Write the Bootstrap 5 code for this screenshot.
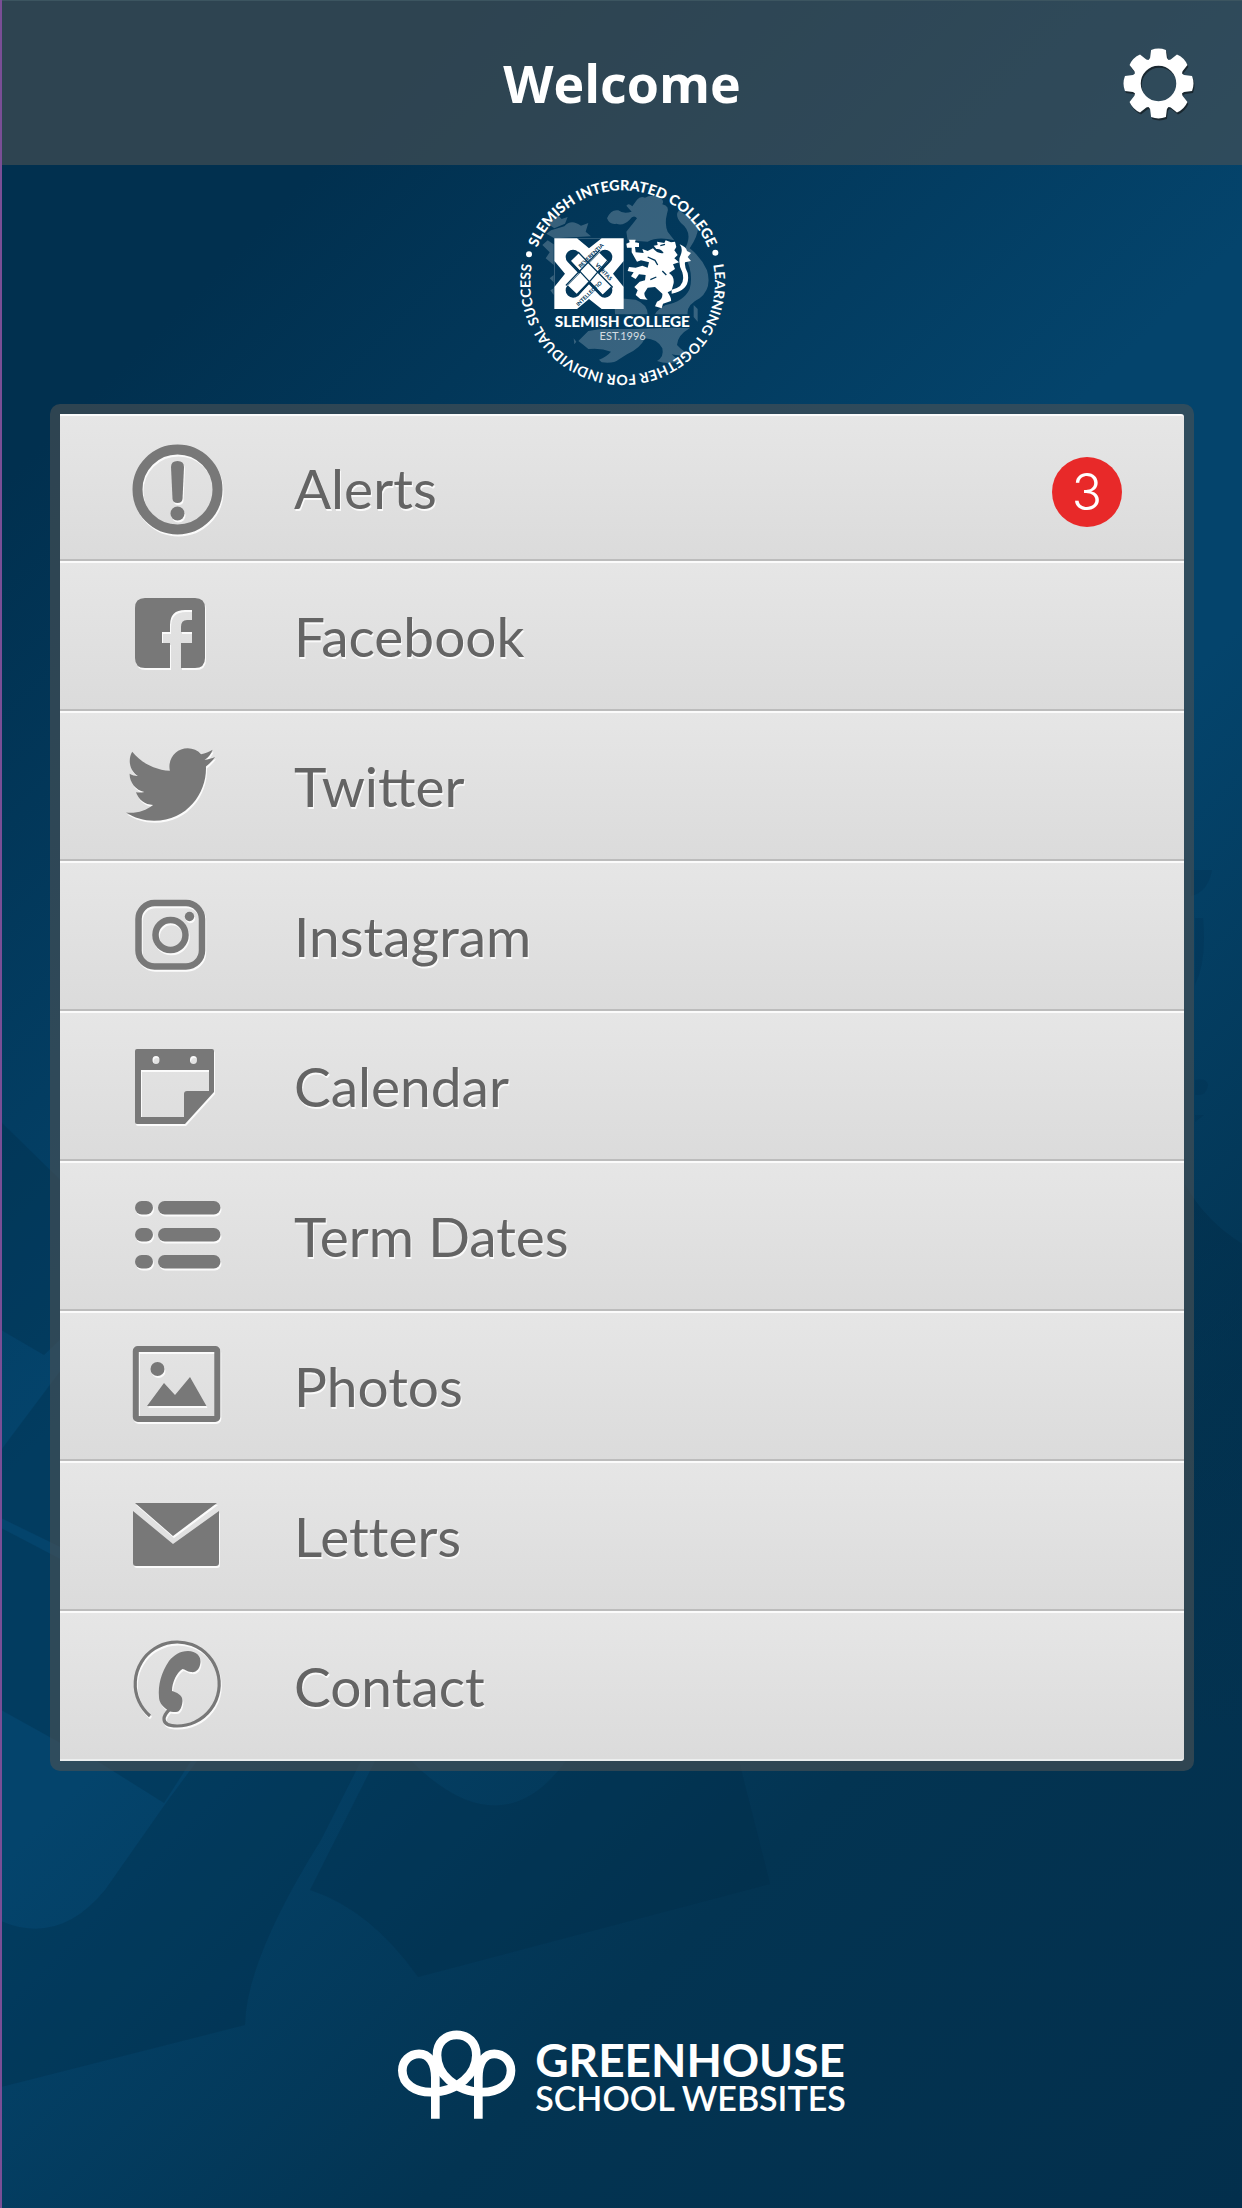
<!DOCTYPE html>
<html lang="en">
<head>
<meta charset="utf-8">
<meta name="viewport" content="width=device-width, initial-scale=1">
<title>Slemish College</title>
<link href="https://cdn.jsdelivr.net/npm/bootstrap@5.3.0/dist/css/bootstrap.min.css" rel="stylesheet">
<style>
  body { font-family: Lato, "Open Sans", sans-serif; background: #02304e; }
  .app-shell {
    border-left: 2px solid #7a4e96;
    background: linear-gradient(135deg, #01304f 0%, #01304f 14%, #04446c 43%, #04446c 54%, #033452 76%, #032f4c 100%);
  }
  .backdrop { z-index: 0; pointer-events: none; }
  .layer { z-index: 1; }
  .top-bar {
    height: 165px; padding: 0 48px;
    background: rgba(77, 82, 84, .6);
    border-top: 1px solid #3c5560;
  }
  .side-slot { width: 71px; }
  .top-title { font-family: "Open Sans", sans-serif; font-weight: 700; font-size: 52px; line-height: 64px; color: #fff; }
  .gear-svg { width: 71px; height: 71px; filter: drop-shadow(1px 2px 0 rgba(20, 30, 36, .8)); }
  .crest { width: 242px; height: 230px; }
  .menu-frame { margin: 9px 48px 0; padding: 10px; border-radius: 10px; background: rgba(77, 82, 84, .6); }
  .menu-row {
    height: 150px; padding: 0 62px 0 66px; border: 0; border-radius: 0;
    color: #646464; font-size: 55px; line-height: 64px;
    background: linear-gradient(#e6e6e6, #dbdbdb);
    border-top: 2px solid #fbfbfb; border-bottom: 2px solid #bcbcbc;
    text-shadow: 1px 2px 0 #fafafa;
  }
  .menu-row + .menu-row { border-top-width: 2px; }
  .menu-row:first-child { height: 147px; border-radius: 0 3px 0 0; }
  .menu-row:last-child { border-radius: 0 0 3px 0; border-bottom-color: #eceeee; }
  .menu-row:hover, .menu-row:focus { color: #505050; background: linear-gradient(#e0e0e0, #d4d4d4); }
  .menu-row svg { width: 100px; height: 100px; margin-right: 68px; fill: #787878; filter: drop-shadow(1px 2px 0 #fbfbfb); }
  .plain-letters { font-variant-ligatures: none; }
  .alert-count {
    width: 70px; height: 70px; background: #e82929; color: #fff;
    font-family: Inter, "Open Sans", sans-serif; font-weight: 300; font-size: 50px; line-height: 70px; text-shadow: none;
  }
  .maker { padding: 0 0 89px; gap: 19px; color: #fff; }
  .maker svg { width: 118px; height: 89px; }
  .maker-name { font-size: 46px; line-height: 42px; font-weight: 700; }
  .maker-sub { font-size: 34px; line-height: 34px; font-weight: 600; }
</style>
<script src="https://cdn.jsdelivr.net/npm/bootstrap@5.3.0/dist/js/bootstrap.bundle.min.js"></script>
</head>
<body>
<div class="app-shell position-relative min-vh-100 d-flex flex-column overflow-hidden">

  <svg class="backdrop position-absolute top-0 start-0 w-100 h-100" viewBox="0 0 1242 2208" preserveAspectRatio="xMidYMid slice" aria-hidden="true">
    <defs>
      <linearGradient id="arcFade" x1="0" y1="0" x2="0" y2="1"><stop offset="0" stop-color="#012a45" stop-opacity=".4"/><stop offset="1" stop-color="#012a45" stop-opacity="0"/></linearGradient>
    </defs>
    <g fill="#012a45" fill-opacity=".3">
      <path d="M0 1122L90 1210V1310L43 1355L0 1330Z"/>
      <path d="M0 1450L90 1330V1562L0 1518Z"/>
      <path d="M0 1528L90 1575V1760L0 1710Z"/>
      <path d="M96 1761L163 1803L190 1761Z"/>
      <path d="M0 1921Q58 1946 104 1890Q132 1850 165 1803L196 1761H360L320 1840Q245 1960 244 2025L0 2087Z"/>
      <path d="M374 1761L309 1890Q370 1910 417 1977L769 1884L738 1761H565Q500 1850 410 1761Z"/>
    </g>
    <path d="M1184 1184Q1205 1222 1242 1244V1740H1184Z" fill="url(#arcFade)"/>
    <path d="M1190 870H1211Q1207 892 1190 896ZM1194 918H1202Q1206 960 1194 985ZM1194 1080Q1206 1078 1207 1085Q1206 1096 1194 1095ZM1194 1115H1203L1194 1122Z" fill="#012a45" fill-opacity=".2"/>
  </svg>

  <header class="top-bar layer d-flex align-items-center justify-content-between">
    <span class="side-slot"></span>
    <h1 class="top-title m-0">Welcome</h1>
    <button type="button" class="btn p-0 border-0 side-slot d-flex" aria-label="Settings">
      <svg class="gear-svg" viewBox="-36 -36 72 72" aria-hidden="true">
        <g fill="#fff">
          <path d="M-12 -20L-8.500 -26L-7.500 -34Q0 -37 7.500 -34L8.500 -26L12 -20Z"/>
          <path d="M-12 -20L-8.500 -26L-7.500 -34Q0 -37 7.500 -34L8.500 -26L12 -20Z" transform="rotate(45)"/>
          <path d="M-12 -20L-8.500 -26L-7.500 -34Q0 -37 7.500 -34L8.500 -26L12 -20Z" transform="rotate(90)"/>
          <path d="M-12 -20L-8.500 -26L-7.500 -34Q0 -37 7.500 -34L8.500 -26L12 -20Z" transform="rotate(135)"/>
          <path d="M-12 -20L-8.500 -26L-7.500 -34Q0 -37 7.500 -34L8.500 -26L12 -20Z" transform="rotate(180)"/>
          <path d="M-12 -20L-8.500 -26L-7.500 -34Q0 -37 7.500 -34L8.500 -26L12 -20Z" transform="rotate(225)"/>
          <path d="M-12 -20L-8.500 -26L-7.500 -34Q0 -37 7.500 -34L8.500 -26L12 -20Z" transform="rotate(270)"/>
          <path d="M-12 -20L-8.500 -26L-7.500 -34Q0 -37 7.500 -34L8.500 -26L12 -20Z" transform="rotate(315)"/>
        </g>
        <circle r="22" fill="none" stroke="#fff" stroke-width="8"/>
      </svg>
    </button>
  </header>

  <main class="layer">
    <div class="d-flex justify-content-center">
      <svg class="crest" viewBox="0 0 726 690" role="img" aria-label="Slemish College crest">
        <defs>
          <path id="ringTop" d="M365 630A277 277 0 0 1 365 76A277 277 0 0 1 365 630"/>
          <path id="ringLow" d="M365 76A277 277 0 0 1 365 630A277 277 0 0 1 365 76"/>
        </defs>
        <!-- large pale lion behind the emblem -->
        <g fill="#fff" fill-opacity=".21">
          <path d="M318 160Q330 132 352 136Q366 148 392 140L376 122Q382 112 394 124L408 104Q418 92 432 98Q452 86 474 98Q492 104 484 118Q508 124 498 146Q490 176 500 200L520 226Q470 214 440 230L380 226L376 200Q396 176 408 160Q398 148 386 164Q366 184 346 176Q326 180 318 160Z"/>
          <path d="M534 136Q520 152 540 174Q582 206 546 262Q580 320 566 372Q548 410 494 420Q470 432 462 448H560Q556 420 596 400Q634 370 618 316Q600 276 566 250Q602 196 586 172Q560 156 534 136Z"/>
          <path d="M170 150L182 162L200 156L192 176L160 190L140 176ZM150 196L190 184Q210 160 240 182L262 174L254 200L270 214L160 220L136 206Z"/>
          <path d="M158 238L140 226L124 240L146 262L134 280L158 300ZM158 330L146 340L158 352ZM148 376L158 370V390Z"/>
          <path d="M340 398L404 404Q440 418 440 448H342Z"/>
          <path d="M232 528L262 498L300 492H400L468 490Q520 486 566 490Q530 510 528 540Q548 562 566 566Q540 574 512 568Q526 582 538 588Q500 600 468 588Q490 576 484 550Q470 522 432 520Q418 550 378 568L352 584Q340 596 302 592L294 584Q316 576 330 560Q300 548 262 552Q248 540 232 528Z"/>
          <path d="M578 420L590 432V470L578 456ZM218 520L226 530L220 538Z"/>
        </g>
        <!-- ring lettering -->
        <g fill="#fff" font-family="Lato, sans-serif">
          <text font-size="43" font-weight="900" text-anchor="middle"><textPath href="#ringTop" startOffset="50%">SLEMISH INTEGRATED COLLEGE</textPath></text>
          <text font-size="42" font-weight="700" text-anchor="middle"><textPath href="#ringLow" startOffset="50%">LEARNING TOGETHER FOR INDIVIDUAL SUCCESS</textPath></text>
        </g>
        <circle cx="84" cy="268" r="9" fill="#fff"/><circle cx="643" cy="263" r="9" fill="#fff"/>
        <!-- knot panel -->
        <path fill="#fff" d="M160 220H368V432H160Z"/>
        <g fill="#02375a">
          <path d="M228 220L264 250L302 220ZM228 432L264 402L302 432ZM160 288L192 326L160 366ZM368 288L336 326L368 366Z"/>
        </g>
        <g fill="none" stroke-linecap="round" stroke-linejoin="round">
          <path stroke="#02375a" stroke-width="44" d="M216 276L312 376M312 276L216 376"/>
          <path stroke="#fff" stroke-width="36" stroke-linecap="butt" d="M222 276L318 376M308 276L214 374"/>
          <path stroke="#02375a" stroke-width="4" d="M232 262L334 366M206 286L304 392M296 256L196 360M322 284L230 392"/>
        </g>
        <g fill="#02375a" font-family="Lato, sans-serif" font-size="16" font-weight="900" text-anchor="middle">
          <text transform="translate(274 276) rotate(-44)">REVERENTIA</text>
          <text transform="translate(304 324) rotate(47)">VERITAS</text>
          <text transform="translate(268 390) rotate(-44)">INTELLECTIO</text>
        </g>
        <!-- small lion -->
        <g fill="#fff">
          <path d="M376 236L386 232L384 224H404L402 232L414 234V246L402 246L404 262L428 264L424 252L440 258L456 250Q470 268 488 264Q480 250 466 252L458 242L470 240L468 230L490 234L494 226L510 232L522 230L526 246L520 256L530 270L520 280L534 292L516 298L522 312L504 324Q520 334 518 354L512 376L500 382Q512 400 510 408L486 416L482 430L462 424L468 410Q486 404 484 386L462 366L440 368L430 384Q430 396 440 404L418 402L404 390L410 376L400 366L416 350L432 346L434 330L414 328L404 342L390 334L398 322L380 318L384 306L404 308L424 302L440 308L444 292L420 286L408 290L400 276L392 262V248H378Z"/>
          <path d="M512 374Q556 366 544 322Q528 290 540 268Q546 250 536 238Q556 246 558 258L570 264L560 276L570 288L552 292Q550 306 560 324Q570 376 512 386Z"/>
        </g>
        <path d="M478 242L492 238M440 276L462 286L470 300M448 344L466 336M496 330L484 318" stroke="#02375a" stroke-width="4" fill="none"/>
        <g fill="#fff" font-family="Lato, sans-serif" text-anchor="middle">
          <text x="364" y="486" font-size="46" font-weight="900">SLEMISH COLLEGE</text>
          <text x="365" y="525" font-size="33" fill-opacity=".8">EST.1996</text>
        </g>
      </svg>
    </div>

    <nav class="menu-frame" aria-label="Main menu">
      <div class="list-group rounded-0">
        <a href="#alerts" class="menu-row list-group-item list-group-item-action d-flex align-items-center">
          <svg viewBox="0 0 100 100" aria-hidden="true"><circle cx="51.500" cy="51.500" r="40" fill="none" stroke="#787878" stroke-width="10"/><path d="M45 29Q45 23 51.500 23T58 29L56.500 61Q56 65 51.500 65T46.500 61Z"/><circle cx="51.500" cy="75.500" r="7"/></svg>
          <span class="me-auto">Alerts</span>
          <span class="alert-count rounded-circle text-center mt-2">3</span>
        </a>
        <a href="#facebook" class="menu-row list-group-item list-group-item-action d-flex align-items-center">
          <svg viewBox="0 0 100 100" aria-hidden="true"><path d="M19 12H69Q79 12 79 22V72Q79 82 69 82H55V57H66V46H55V41Q55 34 61 34H66V24H59Q44 24 44 39V46H36V57H44V82H19Q9 82 9 72V22Q9 12 19 12Z"/></svg>
          <span>Facebook</span>
        </a>
        <a href="#twitter" class="menu-row list-group-item list-group-item-action d-flex align-items-center">
          <svg viewBox="0 0 100 100" aria-hidden="true"><path transform="translate(0 4) scale(.174)" d="M459.37 151.716c.325 4.548.325 9.097.325 13.645 0 138.72-105.583 298.558-298.558 298.558-59.452 0-114.68-17.219-161.137-47.106 8.447.974 16.568 1.299 25.34 1.299 49.055 0 94.213-16.568 130.274-44.832-46.132-.975-84.792-31.188-98.112-72.772 6.498.974 12.995 1.624 19.818 1.624 9.421 0 18.843-1.3 27.614-3.573-48.081-9.747-84.143-51.98-84.143-102.985v-1.299c13.969 7.797 30.214 12.67 47.431 13.319-28.264-18.843-46.781-51.005-46.781-87.391 0-19.492 5.197-37.36 14.294-52.954 51.655 63.675 129.3 105.258 216.365 109.807-1.624-7.797-2.599-15.918-2.599-24.04 0-57.828 46.782-104.934 104.934-104.934 30.213 0 57.502 12.67 76.67 33.137 23.715-4.548 46.456-13.32 66.599-25.34-7.798 24.366-24.366 44.833-46.132 57.827 21.117-2.273 41.584-8.122 60.426-16.243-14.292 20.791-32.161 39.308-52.628 54.253z"/></svg>
          <span>Twitter</span>
        </a>
        <a href="#instagram" class="menu-row list-group-item list-group-item-action d-flex align-items-center">
          <svg viewBox="0 0 100 100" aria-hidden="true"><g fill="none" stroke="#787878" stroke-width="6.500"><rect x="12.500" y="17" width="63.500" height="63.500" rx="16"/><circle cx="44.500" cy="49" r="15"/></g><circle cx="63.500" cy="30.500" r="4.700"/></svg>
          <span>Instagram</span>
        </a>
        <a href="#calendar" class="menu-row list-group-item list-group-item-action d-flex align-items-center">
          <svg viewBox="0 0 100 100" aria-hidden="true"><path fill-rule="evenodd" d="M11 13H86Q88 13 88 15V56L59 88H11Q9 88 9 86V15Q9 13 11 13ZM15 34V81H58V58Q58 55 61 55H83V34ZM30 20A3.500 4 0 0 0 30 28A3.500 4 0 0 0 30 20ZM67.500 20A3.500 4 0 0 0 67.500 28A3.500 4 0 0 0 67.500 20Z"/></svg>
          <span>Calendar</span>
        </a>
        <a href="#term-dates" class="menu-row list-group-item list-group-item-action d-flex align-items-center">
          <svg viewBox="0 0 100 100" aria-hidden="true"><rect x="9" y="15" width="18" height="13.500" rx="6.700"/><rect x="32" y="15" width="62.500" height="13.500" rx="6.700"/><rect x="9" y="42" width="18" height="13.500" rx="6.700"/><rect x="32" y="42" width="62.500" height="13.500" rx="6.700"/><rect x="9" y="69" width="18" height="13.500" rx="6.700"/><rect x="32" y="69" width="62.500" height="13.500" rx="6.700"/></svg>
          <span>Term Dates</span>
        </a>
        <a href="#photos" class="menu-row list-group-item list-group-item-action d-flex align-items-center">
          <svg viewBox="0 0 100 100" aria-hidden="true"><rect x="9.800" y="13" width="81.500" height="70" rx="2" fill="none" stroke="#787878" stroke-width="6"/><circle cx="31.500" cy="33" r="7"/><path d="M21 70L38 47L49 59L64 41L80.500 70Z"/></svg>
          <span>Photos</span>
        </a>
        <a href="#letters" class="menu-row list-group-item list-group-item-action d-flex align-items-center">
          <svg viewBox="0 0 100 100" aria-hidden="true"><path d="M9 17H91L47 50ZM7 25L47 58L93 25V77Q93 80 90 80H10Q7 80 7 77Z"/></svg>
          <span class="plain-letters">Letters</span>
        </a>
        <a href="#contact" class="menu-row list-group-item list-group-item-action d-flex align-items-center">
          <svg viewBox="0 0 100 100" aria-hidden="true"><g transform="translate(0 1)"><path fill="none" stroke="#787878" stroke-width="3.200" d="M24 79A42 42 0 1 1 51 89Q38 89 38 82Q38 78 43 73"/><path d="M62 14C70 14 75 19 74.500 25C74 32 70 36 65 35C61 35 59 32 56.500 32C51 35 46 45 46 54C50 55 57 58 56.500 64C56 70 54 75 50 75C46 75 44 75 41.500 73C36 69 33 65 33 60C32 48 35 36 43 24C48 18 54 14 62 14Z"/></g></svg>
          <span>Contact</span>
        </a>
      </div>
    </nav>
  </main>

  <footer class="maker layer mt-auto d-flex justify-content-center align-items-center">
    <svg viewBox="0 0 354 266" aria-hidden="true"><path transform="translate(-57 -62)" fill="none" stroke="#fff" stroke-width="26" d="M169 328V205C169 160 150 133 120 133C92 133 70 155 70 183C70 225 110 248 155 248C240 248 292 190 292 137C292 100 268 76 233 76C198 76 174 100 174 137C174 190 226 248 311 248C356 248 396 225 396 183C396 155 374 133 346 133C316 133 298 160 298 205V328"/></svg>
    <div class="pt-1">
      <div class="maker-name">GREENHOUSE</div>
      <div class="maker-sub">SCHOOL WEBSITES</div>
    </div>
  </footer>
</div>
</body>
</html>
